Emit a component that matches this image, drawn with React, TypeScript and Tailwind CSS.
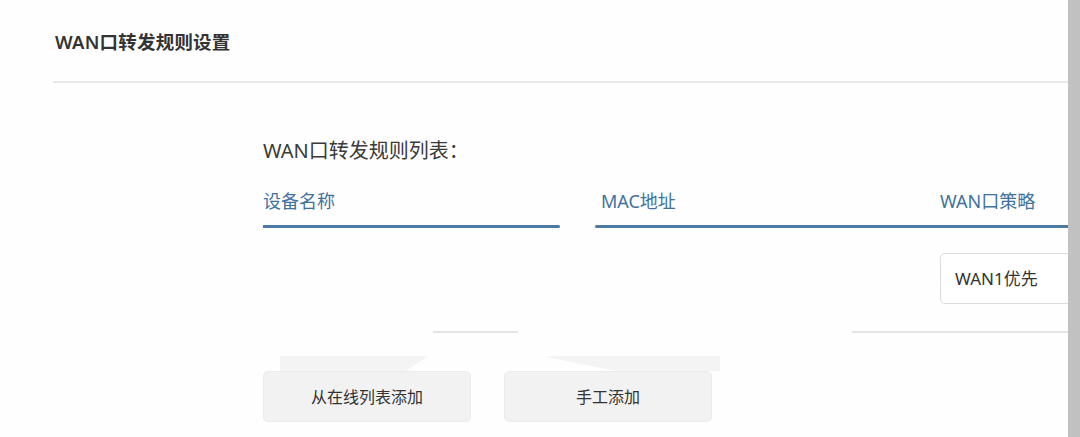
import React from "react";

export default function App() {
  return (
    <div className="flex h-[437px] w-[1080px] overflow-hidden bg-[#fefefe] font-['Noto_Sans','Noto_Sans_CJK_SC',sans-serif] text-[#333]">
      <div className="flex min-w-0 flex-1 flex-col overflow-hidden">
        <div className="flex h-[81px] items-center pl-[55px]">
          <h1 className="mt-[4px] text-[18.5px] font-semibold leading-none tracking-[0.2px] text-[#333]">WAN口转发规则设置</h1>
        </div>
        <div className="ml-[53px] h-[2px] bg-[#e8e8e8]" />
        <div className="flex w-[1100px] flex-col pl-[263px]">
          <div className="mt-[54px] h-[28px] text-[20px] leading-[28px] text-[#3a3a3a]">WAN口转发规则列表：</div>
          <div className="mt-[23px] flex h-[26px] text-[18px] leading-[26px] text-[#3f729f]">
            <div className="w-[338px]">设备名称</div>
            <div className="w-[339px]">MAC地址</div>
            <div className="flex-1">WAN口策略</div>
          </div>
          <div className="mt-[11px] flex h-[3px]">
            <div className="w-[297px] rounded-r-full bg-[#4d7aa5]" />
            <div className="w-[35px]" />
            <div className="flex-1 rounded-l-full bg-[#4d7aa5]" />
          </div>
          <div className="flex">
            <div className="w-[677px]" />
            <div className="mt-[25px] flex h-[51px] w-[160px] items-center rounded-[5px] border border-[#dcdcdc] bg-white pl-[14px] text-[17px] text-[#333]">
              WAN1优先
            </div>
          </div>
          <div className="mt-[27px] flex h-[2px]">
            <div className="w-[170px]" />
            <div className="w-[85px] bg-[#e4e4e4]" />
            <div className="w-[334px]" />
            <div className="flex-1 bg-[#e4e4e4]" />
          </div>
          <div className="mt-[23px] flex h-[15px]">
            <div className="w-[17px]" />
            <div className="w-[148px] bg-[#f4f4f4] [clip-path:polygon(0_0,100%_0,85%_100%,0_100%)]" />
            <div className="w-[120px]" />
            <div className="w-[172px] bg-[#f4f4f4] [clip-path:polygon(0_0,100%_0,100%_100%,40%_100%,0_10%)]" />
          </div>
          <div className="flex gap-[33px]">
            <button className="flex h-[51px] w-[208px] items-center justify-center rounded-[5px] border border-[#ebebeb] bg-[#f2f2f2] text-[16px] text-[#333]">
              从在线列表添加
            </button>
            <button className="flex h-[51px] w-[208px] items-center justify-center rounded-[5px] border border-[#ebebeb] bg-[#f2f2f2] text-[16px] text-[#333]">
              手工添加
            </button>
          </div>
        </div>
      </div>
      <div className="w-[12px] shrink-0 bg-[#c1c1c1]" />
    </div>
  );
}
